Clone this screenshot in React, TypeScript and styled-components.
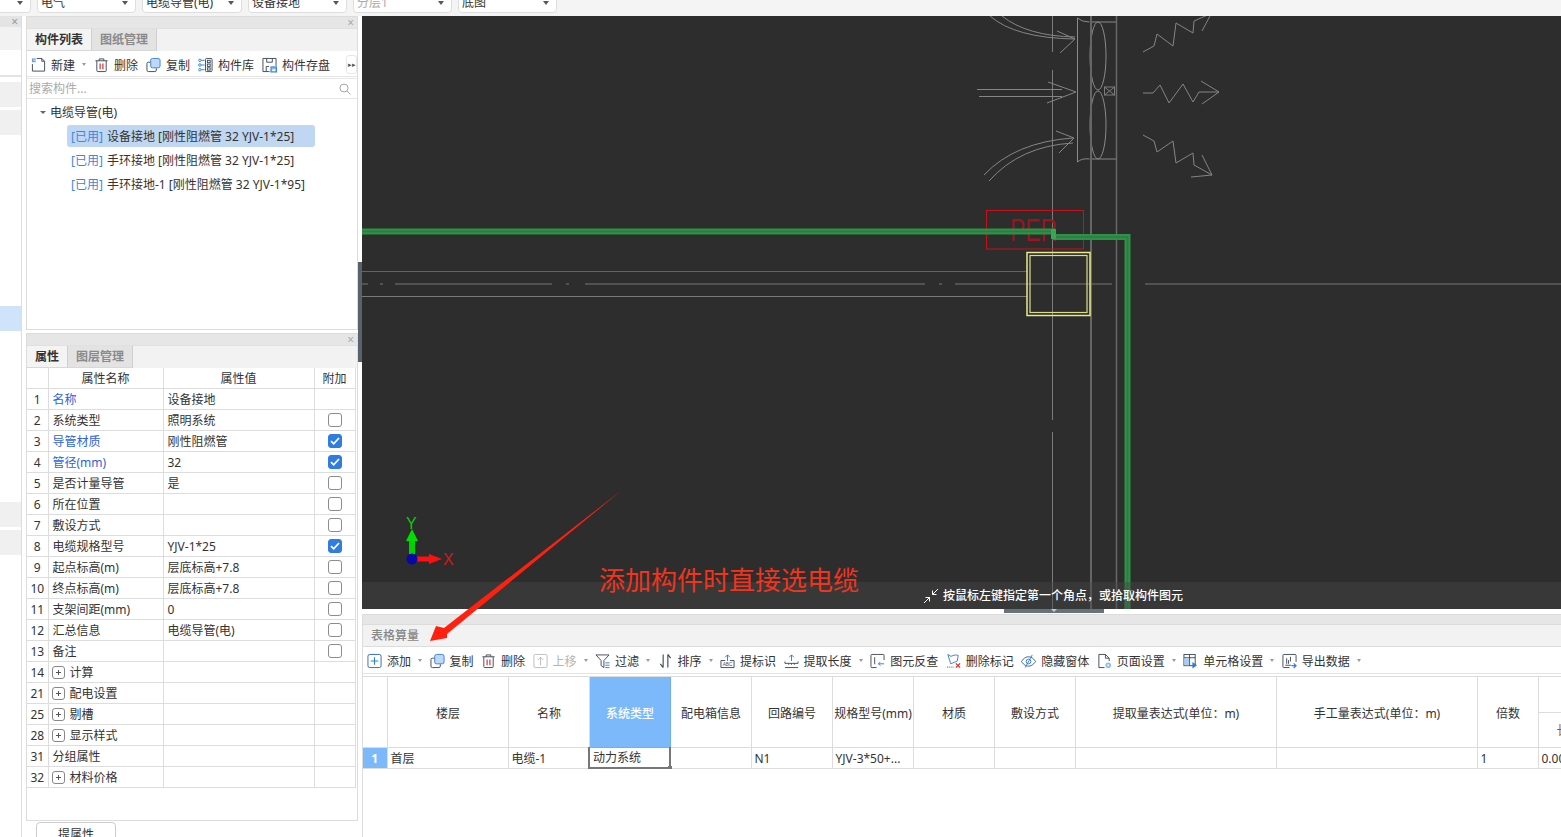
import React from 'react';
import styled, { createGlobalStyle } from 'styled-components';

const Global = createGlobalStyle`
  html, body { margin: 0; padding: 0; background: #fff; overflow: hidden; }
  * { box-sizing: border-box; }
`;

const Page = styled.div`
  position: relative;
  width: 1561px;
  height: 837px;
  overflow: hidden;
  display: flex;
  flex-direction: column;
  background: #fff;
  color: #333;
  font: 12px/16px "Noto Sans", "Noto Sans CJK SC", sans-serif;
`;

const TopBar = styled.div`
  height: 16px;
  flex: none;
  background: #f4f4f4;
  display: flex;
  gap: 6px;
  margin-left: -70px;
  overflow: hidden;
`;
const Dropdown = styled.div<{ $w: number; $off?: boolean }>`
  width: ${p => p.$w}px;
  height: 22px;
  margin-top: -9px;
  flex: none;
  background: #fff;
  border: 1px solid #dedede;
  border-radius: 4px;
  padding: 4px 4px 2px 3px;
  line-height: 16px;
  color: ${p => (p.$off ? '#aaa' : '#333')};
  display: flex;
  justify-content: space-between;
  align-items: center;
`;
const Caret = styled.i`
  display: block;
  flex: none;
  width: 0;
  height: 0;
  border: 3px solid transparent;
  border-top: 3px solid #666;
  border-bottom: 0;
`;
const DropCaret = styled(Caret)`
  margin-right: 3px;
  border-left-width: 3.5px;
  border-right-width: 3.5px;
  border-top-width: 4px;
  border-top-color: #556;
`;

const Body = styled.div`
  flex: 1;
  display: flex;
  min-height: 0;
`;

const Rail = styled.div`
  width: 22px;
  flex: none;
  border-right: 1px solid #ddd;
  display: flex;
  flex-direction: column;
`;
const RailTitle = styled.div`
  height: 11px;
  background: #e4e4e4;
  color: #999;
  display: flex;
  justify-content: flex-end;
  padding-right: 3px;
  align-items: center;
  font-size: 12px;
`;
const RailTabs = styled.div`
  height: 23px;
  background: #f2f2f2;
`;
const RailTools = styled.div`
  height: 27px;
  border-bottom: 2px solid #e4e4e4;
`;
const RailRow = styled.div<{ $mt: number; $blue?: boolean }>`
  height: 25px;
  margin-top: ${p => p.$mt}px;
  background: ${p => (p.$blue ? '#cfe4fb' : '#f0f0f0')};
`;

const Side = styled.div`
  width: 332px;
  flex: none;
  margin-left: 4px;
  display: flex;
  flex-direction: column;
`;
const Panel = styled.section<{ $h: number }>`
  height: ${p => p.$h}px;
  flex: none;
  display: flex;
  flex-direction: column;
  border: 1px solid #dcdcdc;
  background: #fff;
`;
const PanelTitle = styled.div`
  height: 11px;
  flex: none;
  background: #e6e6e6;
  color: #aaa;
  display: flex;
  justify-content: flex-end;
  align-items: center;
  padding-right: 3px;
  font-size: 12px;
`;
const Tabs = styled.div`
  height: 23px;
  flex: none;
  display: flex;
  background: #f2f2f2;
  border-top: 1px solid #e0e0e0;
`;
const Tab = styled.div<{ $on?: boolean }>`
  padding: 3px 8px 0;
  font-weight: 700;
  color: ${p => (p.$on ? '#333' : '#8a8a8a')};
  background: ${p => (p.$on ? '#f4f4f4' : '#e3e3e3')};
  border-right: 1px solid #cfcfcf;
  border-bottom: 1px solid #d8d8d8;
`;
const SideTools = styled.div`
  height: 26px;
  flex: none;
  display: flex;
  align-items: center;
  gap: 8px;
  padding: 2px 0 0 4px;
  border-bottom: 1px solid #e4e4e4;
  background: #fff;
`;
const More = styled.div`
  margin-left: auto;
  width: 11px;
  height: 19px;
  border: 1px solid #e6e6e6;
  border-radius: 3px;
  color: #555;
  font-size: 7px;
  line-height: 17px;
  text-align: center;
`;
const Tool = styled.div<{ $off?: boolean }>`
  display: flex;
  align-items: center;
  gap: 5px;
  flex: none;
  white-space: nowrap;
  color: ${p => (p.$off ? '#b5b5b5' : '#333')};
  svg { flex: none; display: block; }
  span { padding-top: 2px; }
`;
const ToolCaret = styled(Caret)`
  margin-left: 2px;
  border-top-color: #999;
  border-left-width: 2.5px;
  border-right-width: 2.5px;
`;
const Search = styled.div`
  height: 21px;
  flex: none;
  margin-top: 1px;
  display: flex;
  align-items: center;
  justify-content: space-between;
  padding: 0 6px 0 2px;
  color: #aaa;
  border-top: 1px solid #e6e6e6;
  border-bottom: 1px solid #e6e6e6;
`;
const Tree = styled.div`
  flex: 1;
  padding-top: 1px;
  display: flex;
  flex-direction: column;
`;
const TreeRoot = styled.div`
  height: 25px;
  display: flex;
  align-items: center;
  gap: 4px;
  padding-left: 13px;
  color: #333;
`;
const TreeItem = styled.div<{ $on?: boolean }>`
  height: 22px;
  margin: 0 0 2px 40px;
  width: ${p => (p.$on ? '248px' : 'auto')};
  padding-left: 4px;
  border-radius: 3px;
  line-height: 23px;
  white-space: nowrap;
  background: ${p => (p.$on ? '#bfd7f2' : 'transparent')};
`;
const Used = styled.span`
  color: #3f86e0;
  margin-right: 4px;
`;

const PropGrid = styled.table`
  border-collapse: collapse;
  table-layout: fixed;
  width: 328px;
  td, th {
    border: 1px solid #dddddd;
    height: 21px;
    padding: 2px 0 0 4px;
    font-weight: 400;
    white-space: nowrap;
    overflow: hidden;
  }
  th { text-align: center; padding: 2px 0 0; height: 20px; }
  tr > :first-child { border-left: 0; }
  tr:first-child > * { border-top: 0; }
`;
const NumCell = styled.td`
  && { text-align: center; padding: 2px 0 0; }
`;
const NameCell = styled.td<{ $blue?: boolean }>`
  color: ${p => (p.$blue ? '#2e62e0' : '#333')};
`;
const NameWrap = styled.div`
  display: flex;
  align-items: center;
  gap: 5px;
`;
const Plus = styled.span`
  width: 13px;
  height: 13px;
  flex: none;
  margin: -1px 0 0 -1px;
  border: 1px solid #888;
  border-radius: 3px;
  position: relative;
  &::before, &::after { content: ''; position: absolute; background: #555; }
  &::before { left: 3px; right: 3px; top: 5px; height: 1px; }
  &::after { top: 3px; bottom: 3px; left: 5px; width: 1px; }
`;
const CheckCell = styled.td`
  && { padding: 0; text-align: center; }
`;
const Check = styled.span<{ $on: boolean }>`
  display: inline-flex;
  align-items: center;
  justify-content: center;
  vertical-align: middle;
  width: 14px;
  height: 14px;
  border-radius: 3px;
  border: 1px solid ${p => (p.$on ? '#2f7de1' : '#8c8c8c')};
  background: ${p => (p.$on ? '#2f7de1' : '#fff')};
`;
const Bottom = styled.div`
  height: 15px;
  flex: none;
  padding-left: 10px;
  margin-top: 1px;
`;
const BottomTab = styled.div`
  width: 80px;
  height: 24px;
  border: 1px solid #ccc;
  border-radius: 4px 4px 0 0;
  text-align: center;
  padding-top: 4px;
`;
const SideGap = styled.div`
  height: 3px;
  flex: none;
`;

const Splitter = styled.div`
  width: 4px;
  flex: none;
`;
const SplitHandle = styled.div`
  width: 4px;
  height: 100px;
  margin-top: 246px;
  background: #59616d;
`;

const Main = styled.div`
  flex: 1;
  min-width: 0;
  display: flex;
  flex-direction: column;
`;
const Canvas = styled.div`
  position: relative;
  height: 593px;
  flex: none;
  background: #2d2d2d;
  overflow: hidden;
  svg { display: block; }
`;
const StatusBar = styled.div`
  position: absolute;
  left: 0;
  right: 0;
  bottom: 0;
  height: 27px;
  background: rgba(70, 70, 70, 0.45);
  color: #fff;
  display: flex;
  align-items: center;
  gap: 4px;
  padding: 0 0 0 561px;
  font-weight: 500;
`;
const CanvasGrip = styled.div`
  height: 5px;
  flex: none;
  position: relative;
  background: #fff;
`;
const Grip = styled.div`
  position: absolute;
  left: 642px;
  top: 0;
  width: 100px;
  height: 4px;
  background: #68727f;
  display: flex;
  justify-content: center;
`;
const GripCaret = styled(Caret)`
  border-top-color: #c9c9c9;
  border-top-width: 3px;
`;
const Sheet = styled.section`
  flex: 1;
  min-height: 0;
  display: flex;
  flex-direction: column;
  border-left: 1px solid #dcdcdc;
  overflow: hidden;
`;
const SheetTitle = styled.div`
  height: 10px;
  flex: none;
  background: #e6e6e6;
  border-top: 1px solid #dcdcdc;
`;
const SheetHead = styled.div`
  height: 23px;
  flex: none;
  background: #f2f2f2;
  border-top: 1px solid #dcdcdc;
  border-bottom: 1px solid #dcdcdc;
  padding: 3px 0 0 8px;
  font-weight: 500;
  color: #888;
`;
const SheetTools = styled.div`
  height: 26px;
  flex: none;
  margin-top: 1px;
  display: flex;
  align-items: center;
  gap: 7.5px;
  padding-left: 4px;
  border-bottom: 1px solid #e4e4e4;
`;
const GridWrap = styled.div`
  margin-top: 2px;
  flex: none;
  overflow: hidden;
  border-top: 1px solid #dcdcdc;
`;
const Grid = styled.table`
  border-collapse: collapse;
  table-layout: fixed;
  width: 1255px;
  th, td {
    border: 1px solid #dcdcdc;
    font-weight: 400;
    overflow: hidden;
    white-space: nowrap;
    padding: 0;
  }
  th { text-align: center; height: 35px; padding: 4px 0 0 1px; }
  td { height: 21px; padding: 2px 0 0 3px; }
  tr:first-child > th { border-top: 0; }
  tr > :first-child { border-left: 0; }
`;
const HeadOn = styled.th`
  && { background: #7cb9fb; color: #fff; font-weight: 500; border-color: #6fb0f5; }
`;
const RowNum = styled.td`
  && { background: #7cb9fb; color: #fff; font-weight: 700; text-align: center; padding: 2px 0 0; }
`;
const ActiveCell = styled.td`
  && {
    position: relative;
    overflow: visible;
    border: 2px solid #777;
    border-top: 1px solid #dcdcdc;
    padding: 2px 0 0 3px;
  }
`;
const CellHandle = styled.i`
  position: absolute;
  right: -3px;
  bottom: -3px;
  width: 4px;
  height: 4px;
  background: #777;
`;
const SubHead = styled.th`
  && { text-align: left; padding: 2px 0 0 18px; color: #a85a10; }
`;

const Note = styled.div`
  position: absolute;
  left: 599px;
  top: 562px;
  font-size: 26px;
  line-height: 36px;
  color: #f0341e;
  white-space: nowrap;
`;
const Overlay = styled.svg`
  position: absolute;
  left: 0;
  top: 0;
  pointer-events: none;
`;

/* ---------- icons ---------- */
const INK = '#3f4a59';
const BLUE = '#2f7de1';
const S = { width: 15, height: 16, viewBox: '0 0 16 16', fill: 'none', stroke: INK, strokeWidth: 1 } as const;

const INew = () => (
  <svg {...S}>
    <path d="M1.5 7v7.5h13V4l-3-3H6" />
    <path d="M11.5 1v3h3" />
    <path d="M1 1h4v4H1z" fill="#5a9cee" stroke="none" />
    <path d="M2 2h1v1H2zM4 2h1v1H4zM3 3h1v1H3z" fill="#fff" stroke="none" />
  </svg>
);
const ITrash = () => (
  <svg {...S}>
    <path d="M1.5 3.5h13M5.5 3.5V1.5h5v2M3 3.5v10.5a1 1 0 0 0 1 1h8a1 1 0 0 0 1-1V3.5" />
    <path d="M6.5 6.5v6M9.5 6.5v6" stroke="#d8232a" strokeWidth={1.2} />
  </svg>
);
const ICopy = () => (
  <svg {...S}>
    <rect x="5" y="1" width="10" height="10" rx="2" fill="#bcd9fa" stroke="#3d7fd6" />
    <path d="M4.5 5H2.5a1.5 1.5 0 0 0-1.500 1.500v7a1.500 1.500 0 0 0 1.500 1.500h7a1.500 1.500 0 0 0 1.500-1.500V11.500" />
  </svg>
);
const ILib = () => (
  <svg {...S}>
    <rect x="8" y="1" width="7" height="14" rx="1" />
    <rect x="10" y="3" width="3" height="2.500" />
    <rect x="10" y="7" width="3" height="2.500" />
    <rect x="10" y="11" width="3" height="2.500" />
    <circle cx="2" cy="3" r="1.300" stroke={BLUE} />
    <circle cx="2" cy="8" r="1.300" stroke={BLUE} />
    <circle cx="2" cy="13" r="1.300" stroke={BLUE} />
    <path d="M3.500 3h3.500M3.500 8h3.500M3.500 13h3.500" stroke={BLUE} />
  </svg>
);
const ISave = () => (
  <svg {...S}>
    <path d="M8 15H1V1h14v8" />
    <path d="M4.500 15V9.500h3M5 1v4h6V1" />
    <rect x="9.500" y="10" width="6" height="5.500" fill="#7db6f3" stroke="#3d7fd6" />
    <rect x="11" y="12.500" width="3" height="2" fill="#fff" stroke="none" />
  </svg>
);
const IAdd = () => (
  <svg {...S}>
    <rect x="1" y="1" width="14" height="14" rx="2" stroke="#2c68b8" />
    <path d="M8 4v8M4 8h8" stroke={BLUE} strokeWidth={1.2} />
  </svg>
);
const IUp = () => (
  <svg {...S} stroke="#bbb">
    <rect x="1" y="1" width="14" height="14" rx="1.500" />
    <path d="M8 12.500V4M5 7l3-3 3 3" />
  </svg>
);
const IFilter = () => (
  <svg {...S}>
    <path d="M1 1.500h14L9.500 7.500V15l-3-2V7.500z" />
    <path d="M11 10h4.500M11 12.500h4.500M11 15h4.500" stroke={BLUE} />
  </svg>
);
const ISort = () => (
  <svg {...S} strokeWidth={1.2}>
    <path d="M5.500 1v14M5.500 15l-3-4" />
    <path d="M10.500 15V1M10.500 1l3 4" />
  </svg>
);
const IMark = () => (
  <svg {...S}>
    <path d="M8 8V1.500M5.500 4L8 1.500 10.500 4" stroke={BLUE} />
    <path d="M5.500 7.500H1v7.500h14V7.500h-4.500" />
    <text x="8" y="13.500" fontSize="5" textAnchor="middle" fill={INK} stroke="none" fontFamily="Liberation Sans, sans-serif">ABC</text>
  </svg>
);
const ILen = () => (
  <svg {...S}>
    <path d="M8 8V1.500M5.500 4L8 1.500 10.500 4" stroke={BLUE} />
    <path d="M1 10.500h14M1 15h14M1 8.500v2M15 8.500v2M5 10.500v1.500M8 10.500v1.500M11 10.500v1.500" />
  </svg>
);
const ITrace = () => (
  <svg {...S}>
    <path d="M8 1H2a1 1 0 0 0-1 1v12a1 1 0 0 0 1 1h5M8 1h6a1 1 0 0 1 1 1v5" />
    <path d="M5 4v7.500" />
    <path d="M15 11H9M11 9l-2 2 2 2" stroke={BLUE} />
  </svg>
);
const IFlag = () => (
  <svg {...S} stroke="#3d7fd6">
    <path d="M2 1l3 2 5-1.500 3 .5-1 6-7 3z" />
    <path d="M1 14.500h7" stroke={INK} strokeDasharray="1 1" />
    <path d="M10.500 10.500l4.500 4.500M15 10.500l-4.500 4.500" stroke="#e0262c" strokeWidth={1.300} />
  </svg>
);
const IEye = () => (
  <svg {...S} stroke="#3c5a80">
    <path d="M.5 8.500C3 4.500 6 3.500 8 3.500s5 1 7.500 5C13 12.500 10 13.500 8 13.500s-5-1-7.500-5z" />
    <circle cx="8" cy="8.500" r="2.500" stroke={BLUE} />
    <path d="M12 1.500L4.500 15" stroke={BLUE} />
  </svg>
);
const IPage = () => (
  <svg {...S}>
    <path d="M8 15H2V1h7l4 4v3" />
    <path d="M9 1v4h4" />
    <circle cx="12" cy="12.500" r="3" fill="#8fbdf0" stroke="none" />
    <circle cx="12" cy="12.500" r="1" fill="#fff" stroke="none" />
  </svg>
);
const ICell = () => (
  <svg {...S}>
    <rect x="1" y="1" width="12" height="12" />
    <path d="M1 4.500h12M7 1v12" />
    <rect x="1.500" y="5" width="5" height="7.500" fill="#a8cdf6" stroke="none" />
    <path d="M10 9l5 3.500-5 3.500z" fill={BLUE} stroke="none" />
  </svg>
);
const IExport = () => (
  <svg {...S}>
    <path d="M8 15H2a1 1 0 0 1-1-1V2a1 1 0 0 1 1-1h12a1 1 0 0 1 1 1v7" />
    <path d="M3.500 12.500h6M5 5v6M7 7v4M9 3.500v5" />
    <path d="M10 13h4M12.500 10.500L15 13l-2.500 2.500" stroke={BLUE} strokeWidth={1.300} />
  </svg>
);
const ISearch = () => (
  <svg width="12" height="12" viewBox="0 0 12 12" fill="none" stroke="#aaa">
    <circle cx="5" cy="5" r="4" />
    <path d="M8 8l3.500 3.500" />
  </svg>
);
const ITick = () => (
  <svg width="10" height="10" viewBox="0 0 10 10" fill="none" stroke="#fff" strokeWidth={1.800}>
    <path d="M1 5.200l2.700 2.600L9 2" />
  </svg>
);
const IFit = () => (
  <svg width="16" height="16" viewBox="0 0 16 16" fill="none" stroke="#fff">
    <path d="M15 1L9.500 6.500M9.500 2.500v4h4M1 15l5.500-5.500M2.500 9.500h4v4" />
  </svg>
);

/* ---------- data ---------- */
type PropRow = { n: number; name: string; value?: string; check?: boolean; blue?: boolean; plus?: boolean };
const PROPS: PropRow[] = [
  { n: 1, name: '名称', value: '设备接地', blue: true },
  { n: 2, name: '系统类型', value: '照明系统', check: false },
  { n: 3, name: '导管材质', value: '刚性阻燃管', check: true, blue: true },
  { n: 4, name: '管径(mm)', value: '32', check: true, blue: true },
  { n: 5, name: '是否计量导管', value: '是', check: false },
  { n: 6, name: '所在位置', check: false },
  { n: 7, name: '敷设方式', check: false },
  { n: 8, name: '电缆规格型号', value: 'YJV-1*25', check: true },
  { n: 9, name: '起点标高(m)', value: '层底标高+7.8', check: false },
  { n: 10, name: '终点标高(m)', value: '层底标高+7.8', check: false },
  { n: 11, name: '支架间距(mm)', value: '0', check: false },
  { n: 12, name: '汇总信息', value: '电缆导管(电)', check: false },
  { n: 13, name: '备注', check: false },
  { n: 14, name: '计算', plus: true },
  { n: 21, name: '配电设置', plus: true },
  { n: 25, name: '剔槽', plus: true },
  { n: 28, name: '显示样式', plus: true },
  { n: 31, name: '分组属性' },
  { n: 32, name: '材料价格', plus: true },
];

type ToolItem = { icon: React.ReactNode; label: string; caret?: boolean; off?: boolean };
const SIDE_TOOLS: ToolItem[] = [
  { icon: <INew />, label: '新建', caret: true },
  { icon: <ITrash />, label: '删除' },
  { icon: <ICopy />, label: '复制' },
  { icon: <ILib />, label: '构件库' },
  { icon: <ISave />, label: '构件存盘' },
];
const SHEET_TOOLS: ToolItem[] = [
  { icon: <IAdd />, label: '添加', caret: true },
  { icon: <ICopy />, label: '复制' },
  { icon: <ITrash />, label: '删除' },
  { icon: <IUp />, label: '上移', caret: true, off: true },
  { icon: <IFilter />, label: '过滤', caret: true },
  { icon: <ISort />, label: '排序', caret: true },
  { icon: <IMark />, label: '提标识' },
  { icon: <ILen />, label: '提取长度', caret: true },
  { icon: <ITrace />, label: '图元反查' },
  { icon: <IFlag />, label: '删除标记' },
  { icon: <IEye />, label: '隐藏窗体' },
  { icon: <IPage />, label: '页面设置', caret: true },
  { icon: <ICell />, label: '单元格设置', caret: true },
  { icon: <IExport />, label: '导出数据', caret: true },
];
const COLS = [24, 121, 81, 81, 81, 81, 81, 81, 81, 201, 201, 61, 80];
const HEADS = ['', '楼层', '名称', '系统类型', '配电箱信息', '回路编号', '规格型号(mm)', '材质', '敷设方式', '提取量表达式(单位：m)', '手工量表达式(单位：m)', '倍数'];

const Tools = ({ items }: { items: ToolItem[] }) => (
  <>
    {items.map(t => (
      <Tool key={t.label} $off={t.off}>
        {t.icon}
        <span>{t.label}</span>
        {t.caret && <ToolCaret />}
      </Tool>
    ))}
  </>
);

const Drawing = () => (
  <svg width="1199" height="593" viewBox="362 16 1199 593" fill="none">
    <g stroke="#7c7c7c" strokeWidth="1">
      <path d="M1052.500 16V52M1052.500 70V420M1052.500 432V609" />
      <path d="M1077.500 18V162M1077.500 18q4 4 12 4M1077.500 162q4-4 12-3" stroke="#8a8a8a" />
      <path d="M1090 22h26M1090 159h26" stroke="#8a8a8a" />
      <ellipse cx="1098" cy="56" rx="8" ry="34" stroke="#8a8a8a" />
      <ellipse cx="1098" cy="125" rx="8" ry="34" stroke="#8a8a8a" />
      <rect x="1104.500" y="87" width="10" height="8" />
      <path d="M1104.500 87l10 8M1114.500 87l-10 8" />
    </g>
    <path d="M1091 16V609" stroke="#666" strokeWidth="2" />
    <path d="M1116.500 16V609" stroke="#6a6a6a" strokeWidth="1.500" />
    <g stroke="#858585" strokeWidth="1">
      <path d="M990 16Q1015 38 1075 39M1002 16Q1027 36 1075 37M1057 31l18 8-15 14" />
      <path d="M977 89.500H1062M979 96.500H1062M1048 82l28 10-29 11" />
      <path d="M984 175Q1015 142 1073 138M989 181Q1020 146 1073 143M1056 131l18 7-15 15" />
      <path d="M1143 52L1154 46L1157 34L1173 46L1176 23L1193 33L1194 21L1210 14M1202 31L1210 16" />
      <path d="M1143 93L1153 93L1160 85L1169 103L1183 84L1193 102L1199 92L1219 92M1201 81L1219 92L1202 104" />
      <path d="M1143 135L1154 141L1157 152L1173 141L1176 163L1193 153L1194 165L1212 175M1202 155L1212 175L1191 177" />
    </g>
    <path d="M362 271.500H1027" stroke="#636363" />
    <path d="M362 296.500H1027" stroke="#7a7a7a" />
    <path d="M362 284H368M380 284H383M395 284H552M566 284H569M585 284H925M939 284H942M955 284H1112M1145 284H1561" stroke="#777" />
    <rect x="986.500" y="210.500" width="97" height="38.500" stroke="#c8101c" strokeWidth="1" />
    <text x="1010" y="241" fill="#9c1420" fontSize="31" textLength="47" lengthAdjust="spacingAndGlyphs" fontFamily="Liberation Sans, sans-serif">PER</text>
    <path d="M362 231.500H1055" stroke="#2f9149" strokeWidth="6" />
    <path d="M362 231.500H1055" stroke="#2a7d3f" strokeWidth="1.500" />
    <path d="M1053 237H1127.500V609" stroke="#2f9149" strokeWidth="6" />
    <path d="M1053 237H1127.500V609" stroke="#2a7d3f" strokeWidth="1.500" />
    <rect x="1051" y="229" width="5" height="10" fill="#3aa651" />
    <rect x="1027" y="252.500" width="63" height="63" stroke="#e9e98a" strokeWidth="1.500" />
    <rect x="1030" y="255.500" width="57" height="57" stroke="#dede88" strokeWidth="1.200" />
    <path d="M412 559V538" stroke="#00d000" strokeWidth="6" />
    <path d="M406 541l6-12 6 12z" fill="#00e000" />
    <path d="M412 559H431" stroke="#ff1010" strokeWidth="5" />
    <path d="M429 554l13 5-13 5z" fill="#ff1010" />
    <circle cx="412" cy="559" r="5.500" fill="#0808a8" />
    <text x="406" y="529" fill="#10c810" fontSize="16" fontFamily="Liberation Sans, sans-serif">Y</text>
    <text x="443" y="565" fill="#d81818" fontSize="16" fontFamily="Liberation Sans, sans-serif">X</text>
  </svg>
);

export default function App() {
  return (
    <Page>
      <Global />
      <TopBar>
        <Dropdown $w={101}><span /><DropCaret /></Dropdown>
        <Dropdown $w={99}><span>电气</span><DropCaret /></Dropdown>
        <Dropdown $w={100}><span>电缆导管(电)</span><DropCaret /></Dropdown>
        <Dropdown $w={99}><span>设备接地</span><DropCaret /></Dropdown>
        <Dropdown $w={99} $off><span>分层1</span><DropCaret /></Dropdown>
        <Dropdown $w={99}><span>底图</span><DropCaret /></Dropdown>
      </TopBar>
      <Body>
        <Rail>
          <RailTitle>×</RailTitle>
          <RailTabs />
          <RailTools />
          <RailRow $mt={5} />
          <RailRow $mt={3} />
          <RailRow $mt={171} $blue />
          <RailRow $mt={171} />
          <RailRow $mt={3} />
        </Rail>
        <Side>
          <Panel $h={314}>
            <PanelTitle>×</PanelTitle>
            <Tabs>
              <Tab $on>构件列表</Tab>
              <Tab>图纸管理</Tab>
            </Tabs>
            <SideTools>
              <Tools items={SIDE_TOOLS} />
              <More>▸▸</More>
            </SideTools>
            <Search>
              <span>搜索构件...</span>
              <ISearch />
            </Search>
            <Tree>
              <TreeRoot><Caret />电缆导管(电)</TreeRoot>
              <TreeItem $on><Used>[已用]</Used>设备接地 [刚性阻燃管 32 YJV-1*25]</TreeItem>
              <TreeItem><Used>[已用]</Used>手环接地 [刚性阻燃管 32 YJV-1*25]</TreeItem>
              <TreeItem><Used>[已用]</Used>手环接地-1 [刚性阻燃管 32 YJV-1*95]</TreeItem>
            </Tree>
          </Panel>
          <SideGap />
          <Panel $h={488}>
            <PanelTitle>×</PanelTitle>
            <Tabs>
              <Tab $on>属性</Tab>
              <Tab>图层管理</Tab>
            </Tabs>
            <PropGrid>
              <colgroup>
                <col width="21" />
                <col width="115" />
                <col width="151" />
                <col width="41" />
              </colgroup>
              <thead>
                <tr><th /><th>属性名称</th><th>属性值</th><th>附加</th></tr>
              </thead>
              <tbody>
                {PROPS.map(r => (
                  <tr key={r.n}>
                    <NumCell>{r.n}</NumCell>
                    <NameCell $blue={r.blue}>
                      {r.plus ? <NameWrap><Plus />{r.name}</NameWrap> : r.name}
                    </NameCell>
                    <td>{r.value}</td>
                    <CheckCell>
                      {r.check !== undefined && <Check $on={r.check}>{r.check && <ITick />}</Check>}
                    </CheckCell>
                  </tr>
                ))}
              </tbody>
            </PropGrid>
          </Panel>
          <Bottom><BottomTab>提属性</BottomTab></Bottom>
        </Side>
        <Splitter><SplitHandle /></Splitter>
        <Main>
          <Canvas>
            <Drawing />
            <StatusBar><IFit />按鼠标左键指定第一个角点，或拾取构件图元</StatusBar>
          </Canvas>
          <CanvasGrip><Grip><GripCaret /></Grip></CanvasGrip>
          <Sheet>
            <SheetTitle />
            <SheetHead>表格算量</SheetHead>
            <SheetTools><Tools items={SHEET_TOOLS} /></SheetTools>
            <GridWrap>
              <Grid>
                <colgroup>
                  {COLS.map((w, i) => <col key={i} width={w} />)}
                </colgroup>
                <thead>
                  <tr>
                    {HEADS.map((h, i) =>
                      i === 3 ? <HeadOn key={i} rowSpan={2}>{h}</HeadOn> : <th key={i} rowSpan={2}>{h}</th>
                    )}
                    <th />
                  </tr>
                  <tr><SubHead>长度</SubHead></tr>
                </thead>
                <tbody>
                  <tr>
                    <RowNum>1</RowNum>
                    <td>首层</td>
                    <td>电缆-1</td>
                    <ActiveCell>动力系统<CellHandle /></ActiveCell>
                    <td />
                    <td>N1</td>
                    <td>YJV-3*50+...</td>
                    <td />
                    <td />
                    <td />
                    <td />
                    <td>1</td>
                    <td>0.000</td>
                  </tr>
                </tbody>
              </Grid>
            </GridWrap>
          </Sheet>
        </Main>
      </Body>
      <Note>添加构件时直接选电缆</Note>
      <Overlay width="1561" height="837" viewBox="0 0 1561 837">
        <path d="M622 490L444 628L436 626L430 641L447 638L447 634z" fill="#ff2010" />
      </Overlay>
    </Page>
  );
}
